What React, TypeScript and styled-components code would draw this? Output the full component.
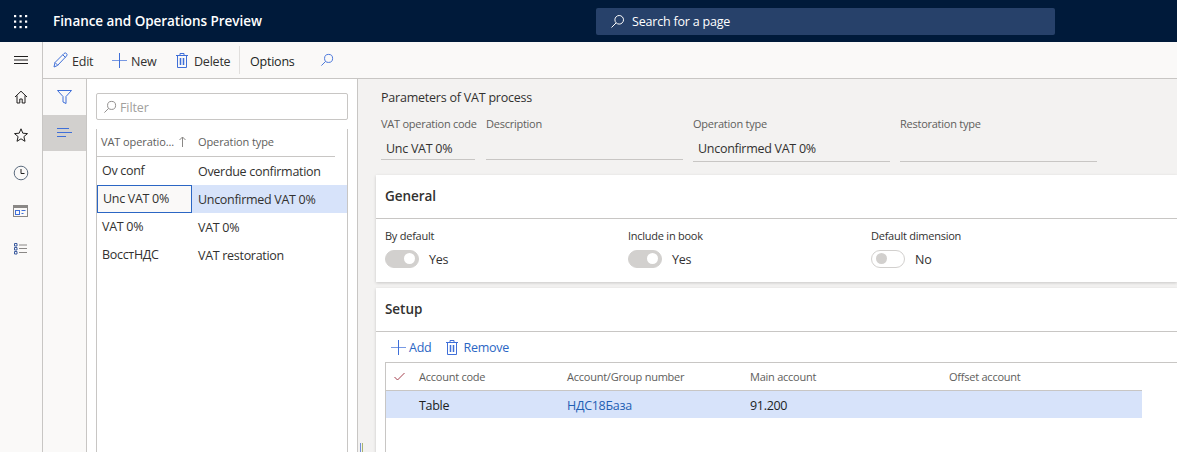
import React from 'react'
import styled, { createGlobalStyle } from 'styled-components'

const Global = createGlobalStyle`
  html, body {
    margin: 0;
    padding: 0;
    height: 452px;
    overflow: hidden;
    background: #fff;
    font-family: "Open Sans", "Noto Sans", sans-serif;
    color: #201f1e;
  }
  * { box-sizing: border-box; }
`

const Page = styled.div`
  width: 1177px;
  height: 452px;
  display: flex;
  flex-direction: column;
  overflow: hidden;
`

const TopBar = styled.header`
  height: 42px;
  flex: none;
  background: #001a3a;
  display: flex;
  align-items: center;
  color: #fff;
`

const Waffle = styled.div`
  width: 53px;
  padding-left: 13px;
  display: flex;
  align-items: center;
`

const Brand = styled.div`
  width: 543px;
  font-size: 13.5px;
  font-weight: 600;
  letter-spacing: -0.05px;
  margin-top: -1px;
`

const SearchBox = styled.div`
  width: 459px;
  height: 27px;
  background: #27416a;
  border-radius: 2px;
  display: flex;
  align-items: center;
  gap: 7px;
  padding: 1px 0 0 14px;
  font-size: 12.5px;
  letter-spacing: -0.2px;
  color: #fff;
`

const Body = styled.div`
  flex: 1;
  display: flex;
  min-height: 0;
`

const NavRail = styled.nav`
  width: 43px;
  flex: none;
  background: #faf9f8;
  border-right: 1px solid #c8c6c4;
  display: flex;
  flex-direction: column;
  align-items: center;
`

const NavItem = styled.div<{ $h?: number }>`
  width: 42px;
  height: ${p => p.$h ?? 38}px;
  display: flex;
  align-items: center;
  justify-content: center;
  padding-right: 1px;
`

const Workspace = styled.div`
  flex: 1;
  min-width: 0;
  display: flex;
  flex-direction: column;
`

const ActionBar = styled.div`
  height: 37px;
  flex: none;
  background: #faf9f8;
  border-bottom: 1px solid #c8c6c4;
  display: flex;
  align-items: center;
  padding-left: 10px;
  font-size: 12.5px;
  letter-spacing: -0.22px;
`

const ActionText = styled.span`
  padding-top: 2px;
`

const Action = styled.div<{ $w: number; $gap?: number }>`
  width: ${p => p.$w}px;
  display: flex;
  align-items: center;
  gap: ${p => p.$gap ?? 4}px;
  color: #323130;
`

const ActionDivider = styled.div`
  width: 1px;
  height: 28px;
  background: #e1dfdd;
  margin-right: 10px;
`

const OptionsTab = styled.div`
  width: 70px;
  padding-top: 2px;
  color: #201f1e;
`

const Panes = styled.div`
  flex: 1;
  min-height: 0;
  display: flex;
`

const FilterStrip = styled.div`
  width: 44px;
  flex: none;
  background: #faf9f8;
  border-right: 1px solid #c8c6c4;
`

const StripCell = styled.div<{ $on?: boolean }>`
  height: 36px;
  background: ${p => (p.$on ? '#d2d0ce' : 'transparent')};
  display: flex;
  align-items: center;
  justify-content: center;
`

const ListPane = styled.aside`
  width: 271px;
  flex: none;
  background: #fff;
  border-right: 1px solid #c8c6c4;
  padding: 14px 9px 0 9px;
  display: flex;
  flex-direction: column;
`

const FilterInput = styled.div`
  height: 27px;
  width: 252px;
  border: 1px solid #c8c6c4;
  border-radius: 2px;
  display: flex;
  align-items: center;
  gap: 3px;
  padding: 1px 0 0 6px;
  font-size: 12.5px;
  letter-spacing: -0.1px;
  color: #a19f9d;
`

const ListGrid = styled.div`
  margin-top: 9px;
  flex: 1;
  width: 252px;
  border-left: 1px solid #c8c6c4;
  border-right: 1px solid #c8c6c4;
`

const ListHead = styled.div`
  width: 238px;
  height: 28px;
  border-bottom: 1px solid #c8c6c4;
  padding-bottom: 2px;
  display: flex;
  align-items: center;
  font-size: 11px;
  letter-spacing: -0.1px;
  color: #605e5c;
`

const ListHeadCell = styled.div<{ $w?: number }>`
  width: ${p => (p.$w ? `${p.$w}px` : 'auto')};
  padding-left: 4px;
  display: flex;
  align-items: center;
  gap: 5px;
`

const ListRow = styled.div<{ $on?: boolean }>`
  height: 28px;
  display: flex;
  align-items: center;
  font-size: 12.5px;
  letter-spacing: -0.3px;
  color: #323130;
  background: ${p => (p.$on ? '#d7e3fa' : 'transparent')};
`

const ListCode = styled.div<{ $on?: boolean }>`
  width: 95px;
  height: 28px;
  line-height: 26px;
  padding-left: 5px;
  background: ${p => (p.$on ? '#faf9f8' : 'transparent')};
  border: 1px solid ${p => (p.$on ? '#2b66c4' : 'transparent')};
  border-left-width: ${p => (p.$on ? '1px' : '0')};
`

const ListType = styled.div`
  padding-left: 6px;
`

const Main = styled.main`
  flex: 1;
  min-width: 0;
  background: #f3f2f1;
  padding-left: 18px;
  display: flex;
  flex-direction: column;
  position: relative;
`

const Splitter = styled.div`
  position: absolute;
  left: 2px;
  bottom: 0;
  width: 3px;
  height: 9px;
  border-left: 1px solid #6f8fd8;
  border-right: 1px solid #a9b56e;
`

const DetailHead = styled.div`
  height: 96px;
  flex: none;
  padding: 11px 0 0 5px;
`

const DetailTitle = styled.div`
  font-size: 12.5px;
  letter-spacing: -0.22px;
  line-height: 16px;
  color: #323130;
`

const FieldRow = styled.div`
  display: flex;
  margin-top: 10px;
`

const Field = styled.div<{ $w: number; $gap: number; $drop?: boolean }>`
  width: ${p => p.$w}px;
  margin-right: ${p => p.$gap}px;
  display: flex;
  flex-direction: column;
  height: ${p => (p.$drop ? '46px' : '44px')};
`

const FieldLabel = styled.div`
  font-size: 11px;
  letter-spacing: -0.25px;
  line-height: 16px;
  color: #605e5c;
  white-space: nowrap;
`

const FieldValue = styled.div`
  flex: 1;
  border-bottom: 1px solid #c8c6c4;
  padding: 9px 0 0 5px;
  font-size: 12.5px;
  letter-spacing: -0.28px;
  line-height: 16px;
  color: #323130;
`

const Card = styled.section<{ $h: number }>`
  height: ${p => p.$h}px;
  flex: none;
  background: #fff;
  box-shadow: 0 1px 3px rgba(0, 0, 0, 0.18);
  margin-bottom: 6px;
`

const CardHead = styled.div`
  height: 44px;
  border-bottom: 1px solid #c8c6c4;
  display: flex;
  align-items: center;
  padding: 0 0 2px 9px;
  font-size: 13.5px;
  font-weight: 600;
  letter-spacing: -0.05px;
  color: #323130;
`

const Toggles = styled.div`
  display: flex;
  padding: 9px 0 0 9px;
`

const ToggleField = styled.div`
  width: 243px;
`

const ToggleLabel = styled.div`
  font-size: 11px;
  letter-spacing: -0.25px;
  line-height: 16px;
  color: #323130;
`

const ToggleLine = styled.div`
  display: flex;
  align-items: center;
  gap: 10px;
  margin-top: 5px;
  font-size: 12.5px;
  letter-spacing: -0.2px;
  color: #323130;
`

const ToggleText = styled.span`
  padding-top: 2px;
`

const Track = styled.div<{ $on?: boolean }>`
  position: relative;
  width: 34px;
  height: 18px;
  border-radius: 9px;
  background: ${p => (p.$on ? '#d2d0ce' : '#fff')};
  border: 1px solid #d2d0ce;
`

const Knob = styled.div<{ $on?: boolean }>`
  position: absolute;
  top: 2px;
  left: ${p => (p.$on ? '18px' : '4px')};
  width: 11px;
  height: 11px;
  border-radius: 50%;
  background: ${p => (p.$on ? '#fff' : '#d2d0ce')};
`

const SetupBar = styled.div`
  height: 30px;
  display: flex;
  align-items: center;
  padding-left: 15px;
  gap: 15px;
  font-size: 12.5px;
  letter-spacing: -0.25px;
  color: #2b66c4;
`

const SetupAction = styled.div<{ $gap: number }>`
  display: flex;
  align-items: center;
  gap: ${p => p.$gap}px;
`

const SetupGrid = styled.div`
  margin-left: 9px;
  border-top: 1px solid #c8c6c4;
  border-left: 1px solid #c8c6c4;
  height: 100px;
`

const GridHead = styled.div`
  width: 756px;
  height: 28px;
  border-bottom: 1px solid #c8c6c4;
  display: flex;
  align-items: center;
  font-size: 11px;
  letter-spacing: -0.24px;
  color: #605e5c;
`

const GridRow = styled.div`
  width: 756px;
  height: 27px;
  padding-top: 1px;
  display: flex;
  align-items: center;
  background: #d7e3fa;
  font-size: 12.5px;
  letter-spacing: -0.3px;
  color: #201f1e;
`

const CheckCell = styled.div`
  width: 33px;
  display: flex;
  padding-left: 8px;
`

const GridCell = styled.div<{ $w: number; $link?: boolean }>`
  width: ${p => p.$w}px;
  color: ${p => (p.$link ? '#1f5fb4' : 'inherit')};
`

const Ico = styled.svg`
  display: block;
  flex: none;
  fill: none;
  stroke: currentColor;
  stroke-width: 1;
`

const BlueIcon = styled(Ico)`
  color: #3f6fd8;
`

const DarkIcon = styled(Ico)`
  color: #201f1e;
`

const GreyIcon = styled(Ico)`
  color: #8a8886;
`

const CheckIcon = styled(Ico)`
  color: #a4404f;
`

const WaffleIcon = () => (
  <svg width="15" height="15" viewBox="0 0 15 15" fill="#fff">
    {[1, 6.5, 12].flatMap(y =>
      [1, 6.5, 12].map(x => <rect key={`${x}-${y}`} x={x} y={y} width="2.2" height="2.2" />)
    )}
  </svg>
)

const SearchIcon = ({ size = 15 }: { size?: number }) => (
  <Ico width={size} height={size} viewBox="0 0 15 15">
    <circle cx="9.2" cy="5.8" r="4.3" />
    <path d="M6 9 1.5 13.5" />
  </Ico>
)

const PencilIcon = () => (
  <BlueIcon width="15" height="16" viewBox="0 0 15 16">
    <path d="M1 15l1-4.5L11 1.500a1.600 1.600 0 0 1 2.500 2.500L4.500 13.500z" />
    <path d="M2 10.500l2.800 2.800M9.800 2.800l2.700 2.700" />
  </BlueIcon>
)

const PlusIcon = () => (
  <BlueIcon width="15" height="15" viewBox="0 0 15 15">
    <path d="M7.500 0v15" />
    <path d="M0 7.500h15" opacity="0.7" />
  </BlueIcon>
)

const TrashIcon = () => (
  <BlueIcon width="12" height="15" viewBox="0 0 12 15">
    <path d="M0 2.500h12M4 2.500V.5h4v2M1.500 2.500v12h9v-12" />
    <path d="M4.500 5v7M7.500 5v7" strokeWidth="1.500" />
  </BlueIcon>
)

const App = () => (
  <Page>
    <Global />
    <TopBar>
      <Waffle><WaffleIcon /></Waffle>
      <Brand>Finance and Operations Preview</Brand>
      <SearchBox>
        <SearchIcon />
        Search for a page
      </SearchBox>
    </TopBar>
    <Body>
      <NavRail>
        <NavItem $h={36}>
          <DarkIcon width="14" height="8" viewBox="0 0 14 8">
            <path d="M0 .5h14M0 4h14M0 7.500h14" />
          </DarkIcon>
        </NavItem>
        <NavItem>
          <DarkIcon width="14" height="14" viewBox="0 0 14 14">
            <path d="M1 7 7 1.200 13 7M3 5.500v7.500h2.800V9h2.400v4H11V5.500" />
          </DarkIcon>
        </NavItem>
        <NavItem>
          <DarkIcon width="14" height="14" viewBox="0 0 14 14">
            <path d="M7 .8l1.800 4.400 4.700.4-3.600 3 1.100 4.700L7 10.800l-4 2.500 1.100-4.700-3.600-3 4.700-.4z" />
          </DarkIcon>
        </NavItem>
        <NavItem>
          <DarkIcon width="16" height="16" viewBox="0 0 16 16">
            <circle cx="8" cy="8" r="6.800" stroke="#5b6b7e" />
            <path d="M8 4v4.500h3.500" />
          </DarkIcon>
        </NavItem>
        <NavItem>
          <GreyIcon width="15" height="12" viewBox="0 0 15 12">
            <rect x=".5" y=".5" width="14" height="11" />
            <path d="M.5 2h14" strokeWidth="2" />
            <rect x="2.500" y="5.500" width="4" height="4" stroke="#3f6fd8" />
            <path d="M8.500 5.500h4M8.500 8.500h2" stroke="#3f6fd8" />
          </GreyIcon>
        </NavItem>
        <NavItem>
          <GreyIcon width="14" height="12" viewBox="0 0 14 12">
            <path d="M.5.500h2.500v2.500H.5zM.5 4.500h2.500v2.500H.5zM.5 8.500h2.500v2.500H.5z" stroke="#3b5b9e" />
            <path d="M5 2h8M5 5.500h8M5 9.500h8" />
          </GreyIcon>
        </NavItem>
      </NavRail>
      <Workspace>
        <ActionBar>
          <Action $w={59}><PencilIcon /><ActionText>Edit</ActionText></Action>
          <Action $w={64}><PlusIcon /><ActionText>New</ActionText></Action>
          <Action $w={63} $gap={6}><TrashIcon /><ActionText>Delete</ActionText></Action>
          <ActionDivider />
          <OptionsTab>Options</OptionsTab>
          <BlueIcon width="14" height="14" viewBox="0 0 15 15">
            <circle cx="9.200" cy="5.800" r="4.300" />
            <path d="M6 9 1.500 13.500" />
          </BlueIcon>
        </ActionBar>
        <Panes>
          <FilterStrip>
            <StripCell>
              <BlueIcon width="15" height="14" viewBox="0 0 15 14">
                <path d="M.5.500h14L9 6.500V13.500l-3-1.500V6.500z" />
              </BlueIcon>
            </StripCell>
            <StripCell $on>
              <BlueIcon width="15" height="10" viewBox="0 0 15 10">
                <path d="M0 .5h12M0 4.500h15M0 8.500h9" />
              </BlueIcon>
            </StripCell>
          </FilterStrip>
          <ListPane>
            <FilterInput>
              <GreyIcon width="14" height="14" viewBox="0 0 15 15">
                <circle cx="9.200" cy="5.800" r="4.300" />
                <path d="M6 9 1.500 13.500" />
              </GreyIcon>
              Filter
            </FilterInput>
            <ListGrid>
              <ListHead>
                <ListHeadCell $w={97}>
                  VAT operatio...
                  <GreyIcon width="7" height="11" viewBox="0 0 7 11">
                    <path d="M3.500 11V1M.5 4l3-3 3 3" />
                  </GreyIcon>
                </ListHeadCell>
                <ListHeadCell>Operation type</ListHeadCell>
              </ListHead>
              <ListRow><ListCode>Ov conf</ListCode><ListType>Overdue confirmation</ListType></ListRow>
              <ListRow $on><ListCode $on>Unc VAT 0%</ListCode><ListType>Unconfirmed VAT 0%</ListType></ListRow>
              <ListRow><ListCode>VAT 0%</ListCode><ListType>VAT 0%</ListType></ListRow>
              <ListRow><ListCode>ВосстНДС</ListCode><ListType>VAT restoration</ListType></ListRow>
            </ListGrid>
          </ListPane>
          <Main>
            <Splitter />
            <DetailHead>
              <DetailTitle>Parameters of VAT process</DetailTitle>
              <FieldRow>
                <Field $w={94} $gap={11}>
                  <FieldLabel>VAT operation code</FieldLabel>
                  <FieldValue>Unc VAT 0%</FieldValue>
                </Field>
                <Field $w={197} $gap={10}>
                  <FieldLabel>Description</FieldLabel>
                  <FieldValue />
                </Field>
                <Field $w={197} $gap={10} $drop>
                  <FieldLabel>Operation type</FieldLabel>
                  <FieldValue>Unconfirmed VAT 0%</FieldValue>
                </Field>
                <Field $w={197} $gap={0} $drop>
                  <FieldLabel>Restoration type</FieldLabel>
                  <FieldValue />
                </Field>
              </FieldRow>
            </DetailHead>
            <Card $h={107}>
              <CardHead>General</CardHead>
              <Toggles>
                <ToggleField>
                  <ToggleLabel>By default</ToggleLabel>
                  <ToggleLine><Track $on><Knob $on /></Track><ToggleText>Yes</ToggleText></ToggleLine>
                </ToggleField>
                <ToggleField>
                  <ToggleLabel>Include in book</ToggleLabel>
                  <ToggleLine><Track $on><Knob $on /></Track><ToggleText>Yes</ToggleText></ToggleLine>
                </ToggleField>
                <ToggleField>
                  <ToggleLabel>Default dimension</ToggleLabel>
                  <ToggleLine><Track><Knob /></Track><ToggleText>No</ToggleText></ToggleLine>
                </ToggleField>
              </Toggles>
            </Card>
            <Card $h={180}>
              <CardHead>Setup</CardHead>
              <SetupBar>
                <SetupAction $gap={3}><PlusIcon />Add</SetupAction>
                <SetupAction $gap={5}><TrashIcon />Remove</SetupAction>
              </SetupBar>
              <SetupGrid>
                <GridHead>
                  <CheckCell>
                    <CheckIcon width="11" height="9" viewBox="0 0 11 9">
                      <path d="M.5 5l3 3L10.500 1" />
                    </CheckIcon>
                  </CheckCell>
                  <GridCell $w={148}>Account code</GridCell>
                  <GridCell $w={183}>Account/Group number</GridCell>
                  <GridCell $w={199}>Main account</GridCell>
                  <GridCell $w={190}>Offset account</GridCell>
                </GridHead>
                <GridRow>
                  <CheckCell />
                  <GridCell $w={148}>Table</GridCell>
                  <GridCell $w={183} $link>НДС18База</GridCell>
                  <GridCell $w={199}>91.200</GridCell>
                </GridRow>
              </SetupGrid>
            </Card>
          </Main>
        </Panes>
      </Workspace>
    </Body>
  </Page>
)

export default App
